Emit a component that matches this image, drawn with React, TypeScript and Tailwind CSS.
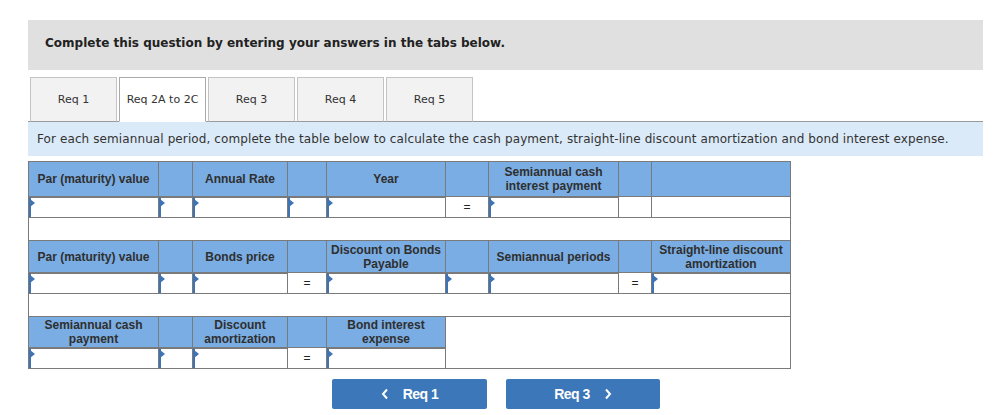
import React from 'react';

const tabs = ['Req 1', 'Req 2A to 2C', 'Req 3', 'Req 4', 'Req 5'];

const colClasses = ['w-[130px]', 'w-[34px]', 'w-[95px]', 'w-[39px]', 'w-[119px]', 'w-[43px]', 'w-[130px]', 'w-[33px]', 'w-[139px]'];

type Cell = 'input' | 'eq' | 'blank';

function HeaderCell({ text }: { text?: string }) {
  return (
    <td className="border border-[#7a7a7a] bg-[#7aade3] px-1 text-center align-middle text-[12px] font-bold leading-[14px] text-[#2f2f2f]">
      {text}
    </td>
  );
}

function InputCell() {
  return (
    <td className="relative border border-[#7a7a7a] bg-white p-0 align-top">
      <div className="h-[20px] border-t border-l-2 border-t-[#7a7a7a] border-l-[#3e74b6]" />
      <span className="absolute left-[1px] top-[2px] h-0 w-0 border-y-[4px] border-l-[5px] border-y-transparent border-l-[#3e74b6]" />
    </td>
  );
}

function BodyCell({ cell }: { cell: Cell }) {
  if (cell === 'input') return <InputCell />;
  return (
    <td className="border border-[#7a7a7a] bg-white text-center align-middle text-[12px] text-[#222]">
      {cell === 'eq' ? '=' : ''}
    </td>
  );
}

function Spacer() {
  return (
    <tr className="h-[23px]">
      <td colSpan={9} className="border border-[#7a7a7a] bg-white" />
    </tr>
  );
}

function Worksheet() {
  return (
    <table
      className="table-fixed border-collapse"
      style={{ fontFamily: '"Liberation Sans", Arial, sans-serif' }}
    >
      <colgroup>
        {colClasses.map((c, i) => (
          <col key={i} className={c} />
        ))}
      </colgroup>
      <tbody>
        <tr className="h-[35px]">
          <HeaderCell text="Par (maturity) value" />
          <HeaderCell />
          <HeaderCell text="Annual Rate" />
          <HeaderCell />
          <HeaderCell text="Year" />
          <HeaderCell />
          <HeaderCell text="Semiannual cash interest payment" />
          <HeaderCell />
          <HeaderCell />
        </tr>
        <tr>
          {(['input', 'input', 'input', 'input', 'input', 'eq', 'input', 'blank', 'blank'] as Cell[]).map((c, i) => (
            <BodyCell key={i} cell={c} />
          ))}
        </tr>
        <Spacer />
        <tr className="h-[32px]">
          <HeaderCell text="Par (maturity) value" />
          <HeaderCell />
          <HeaderCell text="Bonds price" />
          <HeaderCell />
          <HeaderCell text="Discount on Bonds Payable" />
          <HeaderCell />
          <HeaderCell text="Semiannual periods" />
          <HeaderCell />
          <HeaderCell text="Straight-line discount amortization" />
        </tr>
        <tr>
          {(['input', 'input', 'input', 'eq', 'input', 'input', 'input', 'eq', 'input'] as Cell[]).map((c, i) => (
            <BodyCell key={i} cell={c} />
          ))}
        </tr>
        <Spacer />
        <tr className="h-[31px]">
          <HeaderCell text="Semiannual cash payment" />
          <HeaderCell />
          <HeaderCell text="Discount amortization" />
          <HeaderCell />
          <HeaderCell text="Bond interest expense" />
          <td colSpan={4} rowSpan={2} className="border border-[#7a7a7a] bg-white" />
        </tr>
        <tr>
          {(['input', 'input', 'input', 'eq', 'input'] as Cell[]).map((c, i) => (
            <BodyCell key={i} cell={c} />
          ))}
        </tr>
      </tbody>
    </table>
  );
}

export default function App() {
  return (
    <div className="min-h-[415px] bg-white pl-[28px] pt-[20px]" style={{ fontFamily: '"DejaVu Sans", Verdana, sans-serif' }}>
      <div className="w-[955px]">
        <div className="h-[50px] bg-[#e0e0e0] pl-[17px] pt-[10px]">
          <span className="text-[12px] font-bold text-[#222]">
            Complete this question by entering your answers in the tabs below.
          </span>
        </div>

        <div className="mt-[7px] flex items-end border-b border-[#9a9a9a] pl-[2px]">
          {tabs.map((t, i) => {
            const active = i === 1;
            return (
              <div
                key={t}
                className={`-mb-px mr-[2px] flex h-[45px] w-[87px] items-center justify-center border pt-[2px] text-[11px] text-[#333] ${
                  active
                    ? 'border-[#aaa] border-b-white bg-white'
                    : 'border-[#c4c4c4] border-b-[#9a9a9a] bg-[#f2f2f2]'
                }`}
              >
                {t}
              </div>
            );
          })}
        </div>

        <div className="flex h-[34px] items-center bg-[#dbeaf8] pl-[9px] text-[12px] tracking-[0.1px] text-[#333]">
          For each semiannual period, complete the table below to calculate the cash payment, straight-line discount amortization and bond interest expense.
        </div>

        <div className="mt-[5px]">
          <Worksheet />
        </div>

        <div
          className="mt-[10px] flex gap-[19px] pl-[304px]"
          style={{ fontFamily: '"Liberation Sans", Arial, sans-serif' }}
        >
          <button className="flex h-[30px] w-[155px] items-center justify-center gap-[14px] rounded-[2px] bg-[#3b77b9] text-[14px] font-bold tracking-[-0.5px] text-white">
            <svg width="8" height="12" viewBox="0 0 8 12" fill="none">
              <path d="M6 1.5 L2 6 L6 10.5" stroke="white" strokeWidth="2" />
            </svg>
            <span>Req 1</span>
          </button>
          <button className="flex h-[30px] w-[154px] items-center justify-center gap-[14px] rounded-[2px] bg-[#3b77b9] text-[14px] font-bold tracking-[-0.5px] text-white">
            <span>Req 3</span>
            <svg width="8" height="12" viewBox="0 0 8 12" fill="none">
              <path d="M2 1.5 L6 6 L2 10.5" stroke="white" strokeWidth="2" />
            </svg>
          </button>
        </div>
      </div>
    </div>
  );
}
